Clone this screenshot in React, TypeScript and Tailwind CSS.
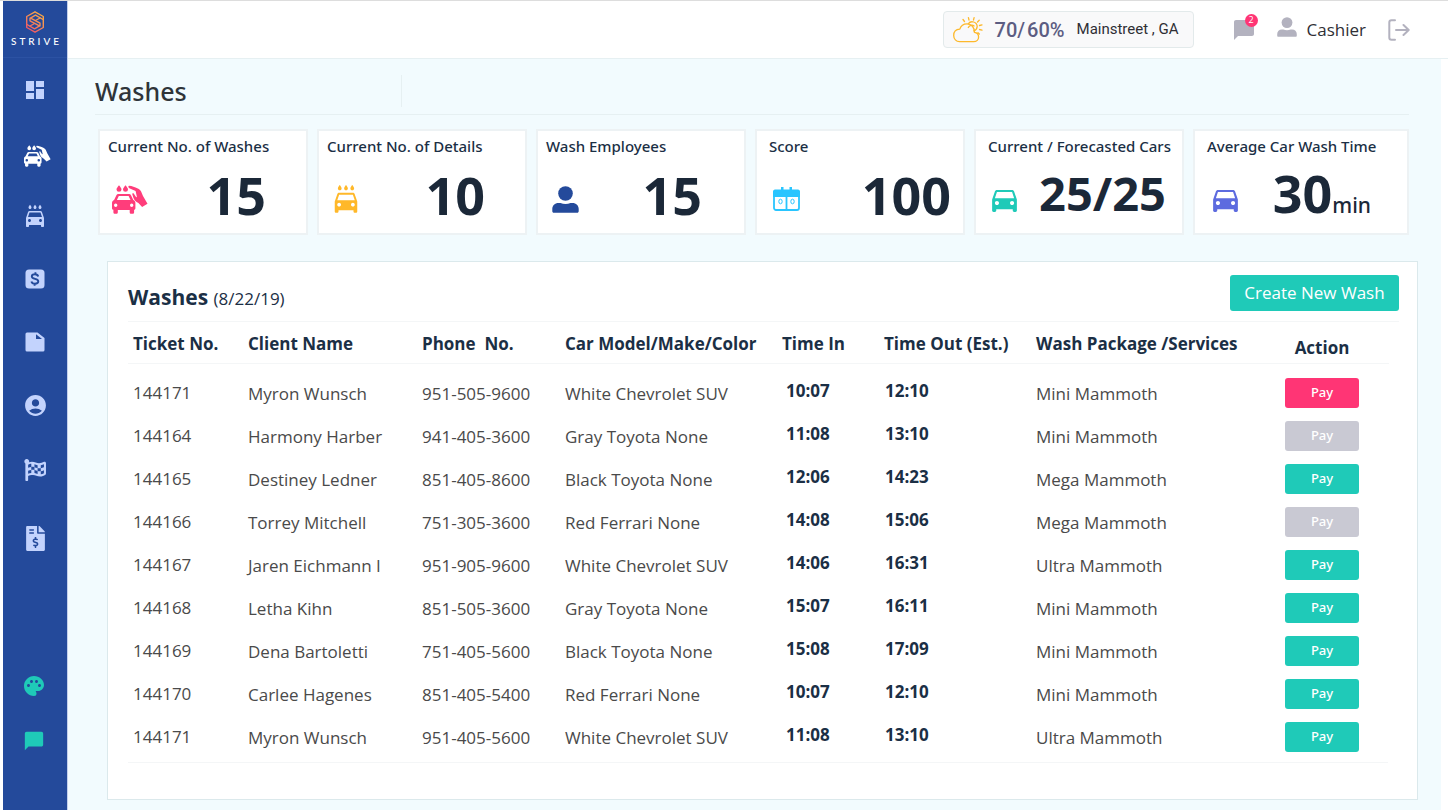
import type { ReactNode } from "react";
import {
  MdAccountCircle,
  MdChatBubble,
  MdDashboard,
  MdDirectionsCar,
  MdLocalCarWash,
  MdPalette,
} from "react-icons/md";
import { FaFileInvoiceDollar, FaFlagCheckered } from "react-icons/fa";

function BrandMark() {
  return (
    <svg viewBox="0 0 18 22" className="h-[22px] w-[18px]" fill="none" aria-hidden="true">
      <defs>
        <linearGradient id="brand" x1="17" y1="1" x2="2" y2="21" gradientUnits="userSpaceOnUse">
          <stop offset="0" stopColor="#fbb040" />
          <stop offset="0.5" stopColor="#f58a55" />
          <stop offset="1" stopColor="#ee4a6b" />
        </linearGradient>
      </defs>
      <g stroke="url(#brand)" strokeWidth="1.4" strokeLinejoin="round" strokeLinecap="round">
        <path d="M9 .8 17.300 5.500v11L9 21.200.7 16.500v-11Z" />
        <path d="M17 8.500 9.500 4.200 4 7.300v2.500l9.800 5.300M1 13.500l7.500 4.300 5.500-3.100v-2.500L4.200 6.900" />
        <path d="M14 7 9.500 9.500M4 15l4.500-2.500" />
      </g>
    </svg>
  );
}

function CarHandIcon({ className }: { className: string }) {
  return (
    <svg viewBox="0 0 36 29" className={className} fill="currentColor" aria-hidden="true">
      <path d="M7 .2c1.500 1.900 2.500 3.100 2.500 4.200a2.500 2.300 0 0 1-5 0C4.500 3.300 5.500 2.100 7 .2Z" />
      <path d="M13.500 .2c1.500 1.900 2.500 3.100 2.500 4.200a2.500 2.300 0 0 1-5 0c0-1.100 1-2.300 2.500-4.200Z" />
      <path d="M17.200 .7c2.800.3 5.600 1.400 8.600 2.700 1.500.7 2.500 1.600 3.300 3.200l1.900 4.300 4.500 7.900-5.400 3.100-3.700-3.900c-2.600-1.300-4.300-3-5.100-5.500l-1-3.200c-.2-1 1-1.400 1.600-.6l2.300 3.500.7-.3-1.300-5.800-6.300-2.900c-1.300-.7-1.200-2.500-.1-2.500Z" />
      <path
        fillRule="evenodd"
        d="M6.300 9h10.800c.9 0 1.500.4 1.900 1.200l2.300 4.700c1.400.7 2.100 1.600 2.100 3v5.300c0 .9-.5 1.500-1.300 1.600v2.500c0 1-.6 1.500-1.600 1.500h-1.200c-1 0-1.600-.5-1.600-1.500v-2.400H5.800v2.400c0 1-.6 1.500-1.600 1.500H3c-1 0-1.600-.5-1.600-1.500v-2.500C.5 24.700 0 24.100 0 23.200v-5.300c0-1.400.7-2.300 2.100-3l2.300-4.700C4.800 9.400 5.400 9 6.300 9Zm.5 2-1.900 3.900h13.600L16.600 11H6.800ZM3.700 18.500a1.700 1.700 0 1 0 0 3.400 1.700 1.700 0 0 0 0-3.400Zm16 0a1.700 1.700 0 1 0 0 3.400 1.700 1.700 0 0 0 0-3.400Z"
      />
    </svg>
  );
}

function DollarSquareIcon() {
  return (
    <svg viewBox="0 0 20 20" className="size-5" aria-hidden="true">
      <rect x="0.500" y="0.500" width="19" height="19" rx="3.500" fill="currentColor" />
      <path
        d="M13.200 7.400C12.800 6 11.600 5.200 10 5.200c-1.900 0-3.200.9-3.200 2.300 0 3.200 6.500 1.600 6.500 4.800 0 1.500-1.300 2.400-3.300 2.400-1.900 0-3.200-.8-3.600-2.300M10.400 3.200v2.200M9.600 14.500v2.300"
        fill="none"
        stroke="#244a9b"
        strokeWidth="1.900"
      />
    </svg>
  );
}

function FileIcon() {
  return (
    <svg viewBox="0 0 20 20" className="size-5" aria-hidden="true">
      <path d="M2 .5h10.500L19.500 6v12a1.500 1.500 0 0 1-1.500 1.500H2A1.500 1.500 0 0 1 .5 18V2A1.500 1.500 0 0 1 2 .5Z" fill="currentColor" />
      <path d="M11 2.200V7h6Z" fill="#244a9b" />
    </svg>
  );
}

function PersonIcon({ className }: { className: string }) {
  return (
    <svg viewBox="0 0 27 27" className={className} fill="currentColor" aria-hidden="true">
      <circle cx="13.500" cy="7.500" r="7.300" />
      <path d="M6.500 17h2c3 1.300 7 1.300 10 0h2c3.600 0 6.200 2.600 6.200 6v2.200c0 .9-.6 1.500-1.500 1.500H1.800c-.9 0-1.500-.6-1.500-1.500V23c0-3.400 2.600-6 6.200-6Z" />
    </svg>
  );
}

function ScoreIcon() {
  return (
    <svg viewBox="0 0 27 24" className="h-6 w-[27px]" fill="none" aria-hidden="true">
      <rect x="1" y="4" width="25" height="19" rx="2" stroke="currentColor" strokeWidth="1.800" />
      <path d="M0 10V4.500C0 3.500.8 2.500 2 2.500h6V0h2.500v2.500h6V0H19v2.500h6c1.200 0 2 1 2 2V10ZM12.600 10h1.800v13h-1.800Z" fill="currentColor" />
      <ellipse cx="7.500" cy="14.500" rx="1.700" ry="2.300" stroke="currentColor" strokeWidth="1" />
      <ellipse cx="19.500" cy="14.500" rx="1.700" ry="2.300" stroke="currentColor" strokeWidth="1" />
    </svg>
  );
}

function WeatherIcon() {
  return (
    <svg viewBox="0 0 30 26" className="h-[26px] w-[30px] shrink-0" fill="none" stroke="#fdb92c" strokeWidth="1.300" strokeLinecap="round" strokeLinejoin="round" aria-hidden="true">
      <path d="M6.500 24.700h14.300c2.700 0 4.800-2 4.800-4.700 0-2.500-1.700-4.400-4.200-4.700.2-4.900-3-8.500-7.400-8.500-3.600 0-6.200 2-7.200 5.300C3 12.300.7 15 .7 18.500c0 3.500 2.500 6.200 5.800 6.200Z" />
      <path d="M15.200 6.800a5 5 0 0 1 9 2.700 5 5 0 0 1-3.300 4.400M15.300 10.500a3.800 3.800 0 0 1 5.800-1.600" />
      <path d="M11.500 4.500 10 2.500M16 3l-.6-2.300M20.500 3l.6-2.300M24.500 5l1.700-1.700M26.500 8.500l2.500-.6M26.500 12.500l2.500.6M25 15.800l1.300 1.200" />
    </svg>
  );
}

function LogoutIcon() {
  return (
    <svg viewBox="0 0 22 22" className="h-[22px] w-[22px]" fill="none" stroke="currentColor" strokeWidth="2" strokeLinecap="round" strokeLinejoin="round" aria-hidden="true">
      <path d="M7 1.300H3.500c-1.300 0-2.200.9-2.200 2.200v15c0 1.300.9 2.200 2.200 2.200H7" />
      <path d="M8 11h12.500M15.500 6l5.200 5-5.200 5" />
    </svg>
  );
}

function NavLink({ label, children, className }: { label: string; children: ReactNode; className: string }) {
  return (
    <a href="#" aria-label={label} className={`flex w-full items-center justify-center ${className}`}>
      {children}
    </a>
  );
}

function Sidebar() {
  return (
    <aside className="flex w-[65px] shrink-0 flex-col border-r border-[#c3d0ec] bg-[#244a9b] text-[#c3d3fd]">
      <a href="#" className="flex h-[57px] flex-col items-center border-b border-[#2c52a3] pt-2.5">
        <BrandMark />
        <span className="mt-0.5 pl-[3px] font-['Lato',sans-serif] text-[10px] leading-3 font-medium tracking-[3px] text-white">STRIVE</span>
      </a>
      <nav aria-label="Main" className="flex flex-col gap-[43px] pt-[22px]">
        <NavLink label="Dashboard" className="h-5">
          <MdDashboard className="size-6" />
        </NavLink>
        <div className="flex flex-col gap-9">
          <NavLink label="Washes" className="h-[26px] pl-1 text-white">
            <CarHandIcon className="h-[22px] w-[27px]" />
          </NavLink>
          <NavLink label="Details" className="h-[21px]">
            <MdLocalCarWash className="size-6" />
          </NavLink>
        </div>
        <NavLink label="Sales" className="h-5">
          <DollarSquareIcon />
        </NavLink>
        <NavLink label="Documents" className="h-5">
          <FileIcon />
        </NavLink>
        <NavLink label="Clients" className="h-5">
          <MdAccountCircle className="size-[25px]" />
        </NavLink>
        <NavLink label="Checkout" className="h-6">
          <FaFlagCheckered className="size-[22px]" />
        </NavLink>
        <NavLink label="Invoices" className="h-[26px]">
          <FaFileInvoiceDollar className="size-[25px]" />
        </NavLink>
      </nav>
      <nav aria-label="Tools" className="mt-auto flex flex-col gap-[31px] pb-[57px] text-[#1fcab8]">
        <NavLink label="Theme" className="h-6 pr-0.5">
          <MdPalette className="size-6" />
        </NavLink>
        <NavLink label="Messages" className="h-6 pr-0.5">
          <MdChatBubble className="size-[22px]" />
        </NavLink>
      </nav>
    </aside>
  );
}

function TopBar() {
  return (
    <header className="flex h-[58px] items-center justify-end border-b border-[#e6f0f2] bg-white pr-[38px]">
      <div className="flex h-[37px] items-center rounded-sm border border-[#e3eaeb] bg-[#f9f9fa] pr-3.5 pl-[9px] font-['Roboto',sans-serif]">
        <WeatherIcon />
        <p className="ml-3 flex gap-0.5 text-xl font-medium text-[#5c5d82]">
          <span>70/</span>
          <span>60%</span>
        </p>
        <span className="ml-3 text-[15px] text-[#2f2f35]">Mainstreet , GA</span>
      </div>
      <button type="button" aria-label="Notifications" className="relative ml-[38px] text-[#b3b2bf]">
        <MdChatBubble className="size-6" />
        <span className="absolute -top-1 -right-0.5 flex size-[13px] items-center justify-center rounded-full bg-[#ff3575] text-[9px] text-white">2</span>
      </button>
      <button type="button" className="ml-[21px] flex items-center text-[#2f3036]">
        <PersonIcon className="mb-1.5 size-5 text-[#b3b2bf]" />
        <span className="ml-2.5 text-[17px]">Cashier</span>
      </button>
      <button type="button" aria-label="Log out" className="ml-[22px] text-[#b3b2bf]">
        <LogoutIcon />
      </button>
    </header>
  );
}

type Stat = { title: string; value: string; unit?: string; size: string; pad: string; body: string; icon: ReactNode };

const stats: Stat[] = [
  { title: "Current No. of Washes", value: "15", size: "text-[52px]", pad: "pl-2", body: "pl-1 pr-10", icon: <CarHandIcon className="h-[29px] w-9 text-[#ff3d7b]" /> },
  { title: "Current No. of Details", value: "10", size: "text-[52px]", pad: "pl-2", body: "pl-1 pr-10", icon: <MdLocalCarWash className="size-[30px] text-[#ffb829]" /> },
  { title: "Wash Employees", value: "15", size: "text-[52px]", pad: "pl-2", body: "pl-1.5 pr-[42px]", icon: <PersonIcon className="size-[27px] text-[#244a9b]" /> },
  { title: "Score", value: "100", size: "text-[52px]", pad: "pl-3", body: "pl-1 pr-3", icon: <ScoreIcon /> },
  { title: "Current / Forecasted Cars", value: "25/25", size: "pb-1 text-[47px]", pad: "pl-3", body: "pr-4", icon: <MdDirectionsCar className="size-[33px] text-[#1fcab8]" /> },
  { title: "Average Car Wash Time", value: "30", unit: "min", size: "pb-1 text-[52px]", pad: "pl-3", body: "pl-0.5 pr-9", icon: <MdDirectionsCar className="size-[33px] text-[#5d6bdf]" /> },
];

function StatCard({ stat }: { stat: Stat }) {
  return (
    <section className={`h-[106px] border-2 border-[#edf2f4] bg-white pt-[5px] ${stat.pad}`}>
      <h2 className="font-['Noto_Sans','Open_Sans',sans-serif] text-[15px] leading-5 font-medium whitespace-nowrap text-[#1b2f45]">{stat.title}</h2>
      <div className={`flex items-center justify-between ${stat.body}`}>
        <span className="flex h-[78px] items-center pt-2 text-[#29c5ff]">{stat.icon}</span>
        <p className={`flex items-baseline leading-[74px] font-bold text-[#1b2838] ${stat.size}`}>
          {stat.value}
          {stat.unit && <span className="font-['Noto_Sans','Open_Sans',sans-serif] text-[21px] leading-8 font-medium">{stat.unit}</span>}
        </p>
      </div>
    </section>
  );
}

const columns = [
  { label: "Ticket No.", width: "w-[115px]" },
  { label: "Client Name", width: "w-[174px]" },
  { label: "Phone\u00a0 No.", width: "w-[143px]" },
  { label: "Car Model/Make/Color", width: "w-[217px]" },
  { label: "Time In", width: "w-[102px]" },
  { label: "Time Out (Est.)", width: "w-[152px]" },
  { label: "Wash Package /Services", width: "w-[224px]" },
];

const payTone = {
  pink: "bg-[#ff3575]",
  gray: "bg-[#c9c9d3]",
  teal: "bg-[#1fcab8]",
};

type Wash = [string, string, string, string, string, string, string, keyof typeof payTone];

const washes: Wash[] = [
  ["144171", "Myron Wunsch", "951-505-9600", "White Chevrolet SUV", "10:07", "12:10", "Mini Mammoth", "pink"],
  ["144164", "Harmony Harber", "941-405-3600", "Gray Toyota None", "11:08", "13:10", "Mini Mammoth", "gray"],
  ["144165", "Destiney Ledner", "851-405-8600", "Black Toyota None", "12:06", "14:23", "Mega Mammoth", "teal"],
  ["144166", "Torrey Mitchell", "751-305-3600", "Red Ferrari None", "14:08", "15:06", "Mega Mammoth", "gray"],
  ["144167", "Jaren Eichmann I", "951-905-9600", "White Chevrolet SUV", "14:06", "16:31", "Ultra Mammoth", "teal"],
  ["144168", "Letha Kihn", "851-505-3600", "Gray Toyota None", "15:07", "16:11", "Mini Mammoth", "teal"],
  ["144169", "Dena Bartoletti", "751-405-5600", "Black Toyota None", "15:08", "17:09", "Mini Mammoth", "teal"],
  ["144170", "Carlee Hagenes", "851-405-5400", "Red Ferrari None", "10:07", "12:10", "Mini Mammoth", "teal"],
  ["144171", "Myron Wunsch", "951-405-5600", "White Chevrolet SUV", "11:08", "13:10", "Ultra Mammoth", "teal"],
];

function WashTable() {
  return (
    <div className="mr-[11px] border-b border-[#f4f6f7] pb-[3px]">
      <table className="w-full table-fixed border-collapse text-left whitespace-nowrap">
        <colgroup>
          {columns.map((c) => (
            <col key={c.label} className={c.width} />
          ))}
          <col className="w-[134px]" />
        </colgroup>
        <thead>
          <tr className="h-[41px] border-b border-[#f4f6f7] text-[17px] text-[#1b2f45]">
            {columns.map((c) => (
              <th key={c.label} scope="col" className="pt-0.5 pl-[5px] font-bold">
                {c.label}
              </th>
            ))}
            <th scope="col" className="pt-2.5 text-center font-bold">
              Action
            </th>
          </tr>
        </thead>
        <tbody className="before:block before:h-2 before:content-['']">
          {washes.map(([ticket, client, phone, car, timeIn, timeOut, pack, tone], i) => (
            <tr key={i} className="h-[43px] text-[17px] text-[#4a4a4a]">
              <td className="pl-[5px]">{ticket}</td>
              <td className="pt-0.5 pl-[5px]">{client}</td>
              <td className="pt-0.5 pl-[5px]">{phone}</td>
              <td className="pt-0.5 pl-[5px]">{car}</td>
              <td className="pb-1 pl-[9px] font-bold text-[#1b2f45]">{timeIn}</td>
              <td className="pb-1 pl-1.5 font-bold text-[#1b2f45]">{timeOut}</td>
              <td className="pt-0.5 pl-[5px]">{pack}</td>
              <td className="text-center">
                <button type="button" disabled={tone === "gray"} className={`h-[30px] w-[74px] rounded-[3px] align-middle font-['Noto_Sans','Open_Sans',sans-serif] text-[13px] font-medium text-white ${payTone[tone]}`}>
                  Pay
                </button>
              </td>
            </tr>
          ))}
        </tbody>
      </table>
    </div>
  );
}

export default function App() {
  return (
    <div className="flex min-h-screen border-t border-[#dddddd] bg-white pb-0.5 pl-[3px] font-['Open_Sans',sans-serif]">
      <Sidebar />
      <div className="flex min-w-0 grow flex-col">
        <TopBar />
        <main className="mr-[7px] grow bg-[#f2fbfe] pb-2.5">
          <div className="ml-[27px] mr-8 flex h-14 border-b border-[#e6f0f2]">
            <h1 className="w-[306px] pt-3.5 font-['Noto_Sans','Open_Sans',sans-serif] text-[25px] leading-9 font-medium text-[#2f3439]">Washes</h1>
            <div className="mt-4 h-8 border-l border-[#e6f0f2]" />
          </div>
          <div className="mt-3.5 mr-8 ml-[30px] grid grid-cols-[repeat(5,210fr)_216fr] gap-[9px]">
            {stats.map((s) => (
              <StatCard key={s.title} stat={s} />
            ))}
          </div>
          <section className="mt-[26px] mr-[23px] ml-[39px] border border-[#dbe9ec] bg-white pt-[13px] pr-[18px] pb-9 pl-5">
            <div className="flex h-[47px] justify-between border-b border-[#f4f6f7]">
              <h2 className="pt-1.5 text-[21px] leading-8 font-bold text-[#1b2f45]">
                Washes <span className="text-[17px] font-normal">(8/22/19)</span>
              </h2>
              <button type="button" className="h-9 w-[169px] rounded-[3px] bg-[#1fcab8] text-[17px] text-white">
                Create New Wash
              </button>
            </div>
            <WashTable />
          </section>
        </main>
      </div>
    </div>
  );
}
